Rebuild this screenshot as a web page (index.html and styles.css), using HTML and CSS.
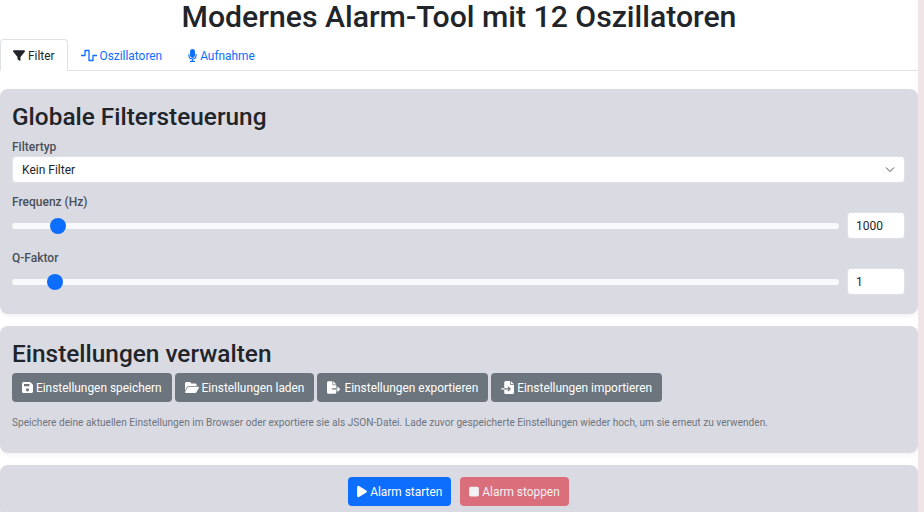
FILE: index.html
```html
<!DOCTYPE html>
<html>

<head>
  <title>Modernes Alarm-Tool</title>
  <link rel="stylesheet" href="styles.css">
</head>

<body>
  <div class="container">
    <h1>Modernes Alarm-Tool mit 12 Oszillatoren</h1>

    <ul class="tabs">
      <li class="tab active">
        <svg class="icon icon-filter" viewBox="0 0 512 512"><path d="M3.9 54.9C10.5 40.9 24.5 32 40 32H472c15.5 0 29.5 8.9 36.1 22.9s4.6 30.5-5.2 42.5L320 320.9V448c0 12.1-6.8 23.2-17.7 28.6s-23.800 4.300-33.500-3l-64-48c-8.100-6-12.800-15.500-12.800-25.600V320.900L9 97.300C-.7 85.400-2.800 68.800 3.900 54.900z"/></svg>
        Filter
      </li>
      <li class="tab">
        <svg class="icon icon-wave" viewBox="0 0 16 13"><path d="M0 6.500h4V1.500h4v10h4V6.500H16" fill="none" stroke="currentColor" stroke-width="1.300" stroke-linejoin="round"/></svg>
        Oszillatoren
      </li>
      <li class="tab">
        <svg class="icon icon-mic" viewBox="3 0 10 16"><path d="M5 3a3 3 0 0 1 6 0v5a3 3 0 0 1-6 0z"/><path d="M3.600 6.500v1.500a4.400 4.400 0 0 0 8.800 0V6.500M8 12.500v2.500M5.500 15.200h5" fill="none" stroke="currentColor" stroke-width="1.300" stroke-linecap="round"/></svg>
        Aufnahme
      </li>
    </ul>

    <section class="card">
      <h2>Globale Filtersteuerung</h2>
      <label class="field-label" for="filter-type">Filtertyp</label>
      <select id="filter-type" class="form-select">
        <option>Kein Filter</option>
        <option>Tiefpass</option>
        <option>Hochpass</option>
      </select>

      <label class="field-label" for="freq">Frequenz (Hz)</label>
      <div class="slider-row">
        <input id="freq" class="slider" type="range" min="20" max="20900" value="1000">
        <input class="form-input" type="number" value="1000">
      </div>

      <label class="field-label" for="q">Q-Faktor</label>
      <div class="slider-row">
        <input id="q" class="slider" type="range" min="0.1" max="21" step="0.1" value="1">
        <input class="form-input" type="number" value="1">
      </div>
    </section>

    <section class="card">
      <h2>Einstellungen verwalten</h2>
      <div class="btn-row">
        <button class="btn btn-secondary">
          <svg class="icon icon-save" viewBox="0 0 448 512"><path fill-rule="evenodd" d="M64 32C29 32 0 61 0 96v320c0 35 29 64 64 64h320c35 0 64-29 64-64V173c0-17-7-33-19-45L352 51c-12-12-28-19-45-19zM96 112h192c9 0 16 7 16 16v64c0 9-7 16-16 16H96c-9 0-16-7-16-16v-64c0-9 7-16 16-16zm128 176a64 64 0 1 1 0 128 64 64 0 1 1 0-128z"/></svg>
          Einstellungen speichern
        </button>
        <button class="btn btn-secondary">
          <svg class="icon icon-wide" viewBox="0 0 576 512"><path d="M88.700 223.800L0 375.800V96C0 60.700 28.700 32 64 32H181.500c17 0 33.300 6.700 45.300 18.700l26.500 26.500c12 12 28.300 18.700 45.300 18.700H416c35.300 0 64 28.700 64 64v32H144c-22.800 0-43.800 12.100-55.300 31.800zm27.600 16.100C122.100 230 132.600 224 144 224H544c11.500 0 22 6.100 27.700 16.100s5.700 22.200-.1 32.100l-112 192C453.900 474 443.400 480 432 480H32c-11.500 0-22-6.100-27.700-16.100s-5.700-22.200 .1-32.100l112-192z"/></svg>
          Einstellungen laden
        </button>
        <button class="btn btn-secondary">
          <svg class="icon icon-wide" viewBox="0 0 576 512"><path d="M0 64C0 29 29 0 64 0h160v128c0 18 14 32 32 32h128v128H216c-13 0-24 11-24 24s11 24 24 24h168v112c0 35-29 64-64 64H64c-35 0-64-29-64-64zm384 64H256V0zm145 183l-72-72c-9-9-25-9-34 0s-9 25 0 34l31 31H384v48h70l-31 31c-9 9-9 25 0 34s25 9 34 0l72-72c9-9 9-25 0-34z"/></svg>
          Einstellungen exportieren
        </button>
        <button class="btn btn-secondary">
          <svg class="icon icon-file" viewBox="0 0 512 512"><path d="M128 64c0-35 29-64 64-64h160v128c0 18 14 32 32 32h128v288c0 35-29 64-64 64H192c-35 0-64-29-64-64V336h174l-31 31c-9 9-9 25 0 34s25 9 34 0l72-72c9-9 9-25 0-34l-72-72c-9-9-25-9-34 0s-9 25 0 34l31 31H128zm0 224v48H24c-13 0-24-11-24-24s11-24 24-24zM512 128H384V0z"/></svg>
          Einstellungen importieren
        </button>
      </div>
      <p class="hint">Speichere deine aktuellen Einstellungen im Browser oder exportiere sie als JSON-Datei. Lade zuvor gespeicherte Einstellungen wieder hoch, um sie erneut zu verwenden.</p>
    </section>

    <section class="card card-actions">
      <button class="btn btn-primary">
        <svg class="icon icon-play" viewBox="0 0 384 512"><path d="M73 39c-15-9-33-9-48-1S0 62 0 80v352c0 18 10 34 25 42s33 8 48-1l288-176c14-9 23-24 23-41s-9-32-23-41z"/></svg>
        Alarm starten
      </button>
      <button class="btn btn-danger" disabled>
        <svg class="icon icon-play" viewBox="0 0 384 512"><path d="M0 128c0-35 29-64 64-64h256c35 0 64 29 64 64v256c0 35-29 64-64 64H64c-35 0-64-29-64-64z"/></svg>
        Alarm stoppen
      </button>
    </section>
  </div>
</body>

</html>
```

FILE: styles.css
```css
* {
  box-sizing: border-box;
  margin: 0;
  padding: 0;
}

html {
  background-color: #f0e4e7;
}

body {
  font-family: Roboto, 'Noto Sans', sans-serif;
  font-size: 11.9px;
  color: #212529;
  width: 918px;
  background-color: #ffffff;
}

h1 {
  font-size: 30.2px;
  font-weight: 500;
  line-height: 33px;
  text-align: center;
  margin-bottom: 6px;
}

h2 {
  font-size: 24.4px;
  font-weight: 500;
  line-height: 31px;
  margin-bottom: 4px;
}

h2 + .field-label {
  margin: 7px 0 1px;
}

.icon {
  width: 13px;
  height: 13px;
  fill: currentColor;
  vertical-align: -2px;
}

.icon-filter {
  width: 12px;
}

.icon-wave {
  width: 16px;
}

.icon-mic {
  width: 9px;
}

.icon-save {
  width: 11px;
}

.icon-wide {
  width: 14px;
}

.icon-play {
  width: 10px;
}

.tabs {
  display: flex;
  list-style: none;
  height: 32px;
  border-bottom: 1px solid #dee2e6;
  margin-bottom: 18px;
}

.tab {
  padding: 0 12px;
  height: 32px;
  line-height: 32px;
  color: #0d6efd;
  border: 1px solid transparent;
  border-radius: 4px 4px 0 0;
}

.tab.active {
  color: #212529;
  background-color: #ffffff;
  border-color: #dee2e6 #dee2e6 #ffffff;
}

.card {
  background-color: #dadae3;
  border-radius: 8px;
  padding: 12px 13px 12px 12px;
  margin-bottom: 12px;
  box-shadow: 0 2px 4px rgba(0, 0, 0, 0.05);
}

.field-label {
  display: block;
  font-size: 12px;
  font-weight: 500;
  line-height: 16px;
  color: #495057;
  margin-bottom: 2px;
}

.form-select {
  display: block;
  width: 100%;
  height: 27px;
  padding: 0 36px 0 9px;
  margin-bottom: 11px;
  font-family: inherit;
  font-size: 12px;
  color: #212529;
  background-color: #ffffff;
  background-image: url("data:image/svg+xml,%3csvg xmlns='http://www.w3.org/2000/svg' viewBox='0 0 16 16'%3e%3cpath fill='none' stroke='%23343a40' stroke-linecap='round' stroke-linejoin='round' stroke-width='1.2' d='m3 5 5 5 5-5'/%3e%3c/svg%3e");
  background-repeat: no-repeat;
  background-position: right 8px center;
  background-size: 12px 12px;
  border: 1px solid #dee2e6;
  border-radius: 4px;
  appearance: none;
}

.slider-row {
  display: flex;
  align-items: center;
  gap: 8px;
  margin-bottom: 11px;
}

.slider-row:last-child {
  margin-bottom: 7px;
}

.slider {
  flex: 1;
  width: 0;
  height: 16px;
  background: transparent;
  appearance: none;
}

.slider::-webkit-slider-runnable-track {
  height: 6px;
  background-color: #f8f9fa;
  border-radius: 3px;
}

.slider::-webkit-slider-thumb {
  appearance: none;
  width: 16px;
  height: 16px;
  margin-top: -5px;
  background-color: #0d6efd;
  border-radius: 50%;
}

.form-input {
  flex-shrink: 0;
  width: 58px;
  height: 27px;
  padding: 0 8px;
  font-family: inherit;
  font-size: 12px;
  color: #212529;
  background-color: #ffffff;
  border: 1px solid #dee2e6;
  border-radius: 4px;
  appearance: textfield;
}

.form-input::-webkit-inner-spin-button {
  appearance: none;
}

.btn-row {
  display: flex;
  gap: 3px;
}

.btn {
  height: 29px;
  padding: 0 9px;
  font-family: inherit;
  font-size: 11.9px;
  color: #ffffff;
  border: 1px solid transparent;
  border-radius: 4px;
  cursor: pointer;
}

.btn-secondary {
  background-color: #6c757d;
}

.btn-primary {
  background-color: #0d6efd;
}

.btn-danger {
  background-color: #dc3545;
  opacity: 0.65;
}

.hint {
  font-size: 10.15px;
  line-height: 14px;
  color: #6c757d;
  margin: 14px 0 11px;
}

.card-actions {
  display: flex;
  justify-content: center;
  gap: 9px;
}

.card-actions .btn {
  padding: 0 8px;
}
```
